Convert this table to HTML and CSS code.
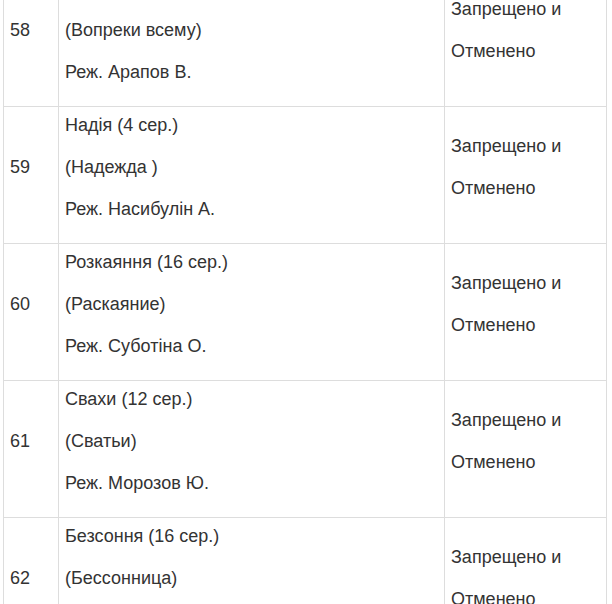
FILE: index.html
```html
<!DOCTYPE html>
<html lang="ru">
<head>
<meta charset="utf-8">
<link rel="stylesheet" href="styles.css">
</head>
<body>
<div class="wrap">
<table class="list">
  <colgroup><col class="c1"><col class="c2"><col class="c3"></colgroup>
  <tr>
    <td><p>58</p></td>
    <td><p>&nbsp;</p><p>(Вопреки всему)</p><p>Реж. Арапов В.</p></td>
    <td><p>Запрещено и</p><p>Отменено</p></td>
  </tr>
  <tr>
    <td><p>59</p></td>
    <td><p>Надія (4 сер.)</p><p>(Надежда )</p><p>Реж. Насибулін А.</p></td>
    <td><p>Запрещено и</p><p>Отменено</p></td>
  </tr>
  <tr>
    <td><p>60</p></td>
    <td><p>Розкаяння (16 сер.)</p><p>(Раскаяние)</p><p>Реж. Суботіна О.</p></td>
    <td><p>Запрещено и</p><p>Отменено</p></td>
  </tr>
  <tr>
    <td><p>61</p></td>
    <td><p>Свахи (12 сер.)</p><p>(Сватьи)</p><p>Реж. Морозов Ю.</p></td>
    <td><p>Запрещено и</p><p>Отменено</p></td>
  </tr>
  <tr>
    <td><p>62</p></td>
    <td><p>Безсоння (16 сер.)</p><p>(Бессонница)</p><p>&nbsp;</p></td>
    <td><p>Запрещено и</p><p>Отменено</p></td>
  </tr>
</table>
</div>
</body>
</html>
```
FILE: styles.css
```css
html, body {
  margin: 0;
  padding: 0;
  background: #fff;
}
.wrap {
  width: 612px;
  height: 604px;
  overflow: hidden;
  padding-left: 3px;
  box-sizing: border-box;
}
.list {
  margin-top: -31px;
  width: 603px;
  border-collapse: collapse;
  table-layout: fixed;
  font-family: "Liberation Sans", Arial, sans-serif;
  font-size: 18px;
  color: #333;
}
.c1 { width: 55px; }
.c2 { width: 386px; }
.c3 { width: 162px; }
.list td {
  border: 1px solid #ddd;
  padding: 6px 6px 4px 6px;
  vertical-align: middle;
  height: 126px;
}
.list p {
  margin: 0 0 18px 0;
  line-height: 24px;
}
```
